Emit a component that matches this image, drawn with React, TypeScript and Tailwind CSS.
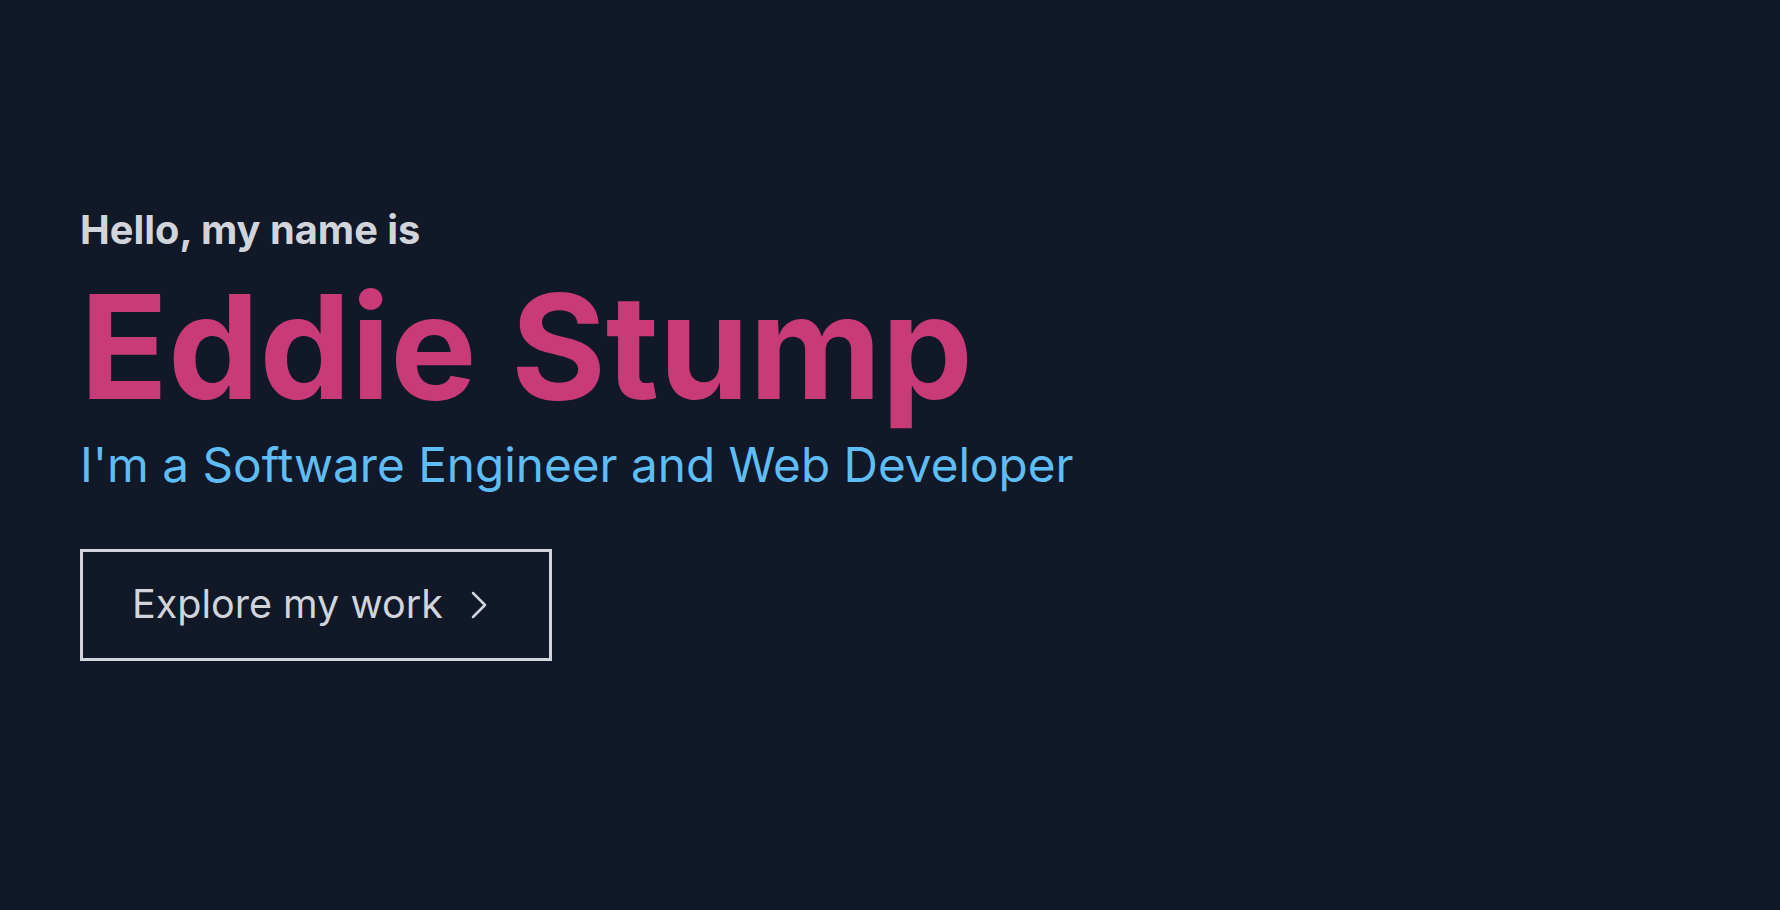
import React from 'react';

const ChevronRight: React.FC = () => (
  <svg width="48" height="48" viewBox="0 0 24 24" fill="none" stroke="currentColor" strokeWidth="1.25" strokeLinecap="round" strokeLinejoin="round">
    <path d="m9 18 6-6-6-6" />
  </svg>
);

export default function App() {
  return (
    <div className="w-full h-[910px] bg-[#111827] font-['Inter','Liberation_Sans',sans-serif] overflow-hidden">
      <section className="flex flex-col items-start pl-20 pt-[210px]">
        <p className="text-[39.8px] leading-none font-bold text-[#d1d5db]">Hello, my name is</p>
        <h1 className="mt-6 text-[145px] leading-none font-bold text-[#c93b77]">Eddie Stump</h1>
        <p className="mt-[23px] text-[47.7px] leading-none text-[#5fbdf5]">I'm a Software Engineer and Web Developer</p>
        <button className="mt-[59px] flex items-center border-[3px] border-[#d1d5db] pl-[49px] pr-[46px] py-[33px] text-[39.5px] leading-none text-[#d1d5db]">
          <span>Explore my work</span>
          <span className="ml-3 -my-1"><ChevronRight /></span>
        </button>
      </section>
    </div>
  );
}
